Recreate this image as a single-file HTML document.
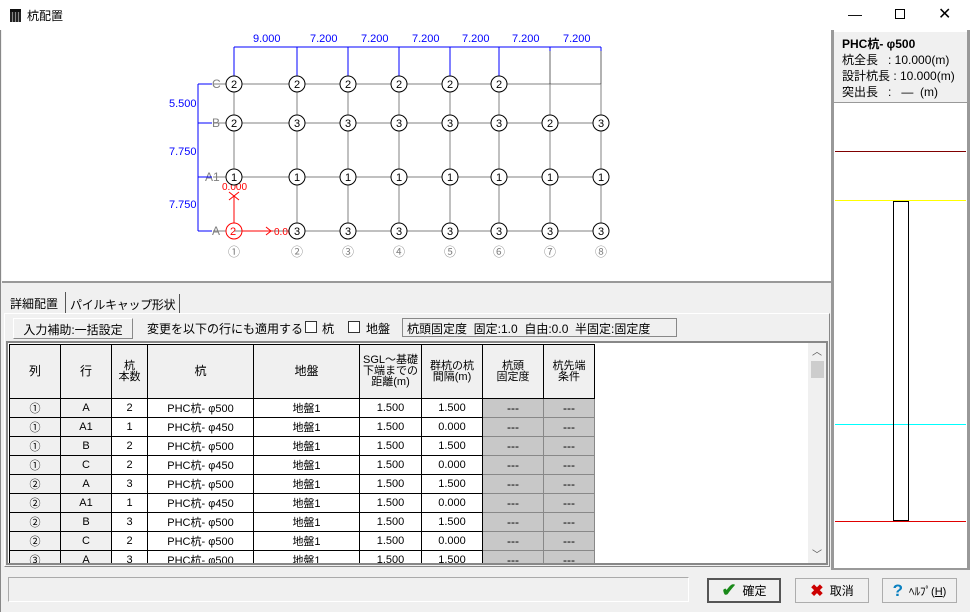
<!DOCTYPE html>
<html><head><meta charset="utf-8"><style>
*{box-sizing:border-box;margin:0;padding:0}
body{width:970px;height:612px;background:#f0f0f0;position:relative;overflow:hidden;font-family:"Liberation Sans","Noto Sans CJK JP",sans-serif;font-size:12px;color:#000}
.a{position:absolute;white-space:nowrap}
table{border-collapse:collapse;table-layout:fixed}
td{border:1px solid #000;text-align:center;height:19px;font-size:11px;padding:0;white-space:nowrap;overflow:hidden}
.h td{height:54px;background:#f0f0f0;line-height:11px}
.g{background:#f0f0f0}
.k{background:#c8c8c8;border-color:#888;font-size:12px}
.btn{position:absolute;top:578px;height:25px;background:#f0f0f0;border:1px solid #adadad;font-size:12px;display:flex;align-items:center;justify-content:center;gap:6px}
</style></head><body>
<div class="a" style="left:0;top:0;width:970px;height:30px;background:#fff"></div>
<div class="a" style="left:10px;top:9px;width:11px;height:13px;background:repeating-linear-gradient(90deg,#222 0 2px,#888 2px 3px);border-top:3px solid #111"></div>
<div class="a" style="left:27px;top:7px;font-size:12px">杭配置</div>
<div class="a" style="left:848px;top:6px;font-size:14px">—</div>
<div class="a" style="left:895px;top:9px;width:10px;height:10px;border:1px solid #000"></div>
<div class="a" style="left:938px;top:4px;font-size:16px">✕</div>
<div class="a" style="left:0;top:30px;width:1px;height:582px;background:#888"></div>
<div class="a" style="left:2px;top:30px;width:829px;height:253px;background:#fff;border-bottom:2px solid #999"></div>
<svg class="a" style="left:0;top:0" width="831" height="283" font-family="Liberation Sans" font-size="11">
<g stroke="#808080" fill="none">
<line x1="234" y1="84" x2="601" y2="84"/><line x1="234" y1="123" x2="601" y2="123"/><line x1="234" y1="177" x2="601" y2="177"/><line x1="234" y1="231" x2="601" y2="231"/>
<line x1="234" y1="84" x2="234" y2="177"/>
<line x1="297" y1="84" x2="297" y2="231"/><line x1="348" y1="84" x2="348" y2="231"/><line x1="399" y1="84" x2="399" y2="231"/><line x1="450" y1="84" x2="450" y2="231"/><line x1="499" y1="84" x2="499" y2="231"/><line x1="550" y1="84" x2="550" y2="231"/><line x1="601" y1="84" x2="601" y2="231"/>
<line x1="213" y1="84" x2="226" y2="84"/><line x1="213" y1="123" x2="226" y2="123"/><line x1="213" y1="177" x2="226" y2="177"/><line x1="213" y1="231" x2="226" y2="231"/>
</g>
<g fill="#808080" font-size="12"><text x="212" y="88">C</text><text x="212" y="127">B</text><text x="205" y="181">A1</text><text x="212" y="235">A</text></g>
<g stroke="#0000ff" fill="none">
<line x1="234" y1="47" x2="601" y2="47"/>
<line x1="234" y1="47" x2="234" y2="76"/><line x1="297" y1="47" x2="297" y2="76"/><line x1="348" y1="47" x2="348" y2="76"/><line x1="399" y1="47" x2="399" y2="76"/><line x1="450" y1="47" x2="450" y2="76"/><line x1="499" y1="47" x2="499" y2="76"/><line x1="550" y1="47" x2="550" y2="51"/><line x1="601" y1="47" x2="601" y2="51"/>
<line x1="198" y1="84" x2="198" y2="231"/>
<line x1="198" y1="84" x2="212" y2="84"/><line x1="198" y1="123" x2="212" y2="123"/><line x1="198" y1="177" x2="212" y2="177"/><line x1="198" y1="231" x2="212" y2="231"/>
</g>
<g stroke="#000" stroke-opacity="0.6"><line x1="550" y1="51" x2="550" y2="84"/><line x1="601" y1="51" x2="601" y2="84"/></g>
<g fill="#0000ff"><text x="253" y="42">9.000</text><text x="310" y="42">7.200</text><text x="361" y="42">7.200</text><text x="412" y="42">7.200</text><text x="462" y="42">7.200</text><text x="512" y="42">7.200</text><text x="563" y="42">7.200</text>
<text x="169" y="107">5.500</text><text x="169" y="155">7.750</text><text x="169" y="208">7.750</text></g>
<g stroke="#ff0000" fill="none"><line x1="234" y1="196" x2="234" y2="223"/><line x1="242" y1="231" x2="273" y2="231"/><path d="M229 192l10 8M239 192l-10 8M266 227l5 4-5 4"/><circle cx="234" cy="231" r="8"/></g>
<g fill="#ff0000" font-size="10"><text x="222" y="190">0.000</text><text x="274" y="235">0.000</text><text x="230" y="235" font-size="11">2</text></g>
<g stroke="#000" fill="#fff">
<circle cx="234" cy="84" r="8"/><circle cx="297" cy="84" r="8"/><circle cx="348" cy="84" r="8"/><circle cx="399" cy="84" r="8"/><circle cx="450" cy="84" r="8"/><circle cx="499" cy="84" r="8"/>
<circle cx="234" cy="123" r="8"/><circle cx="297" cy="123" r="8"/><circle cx="348" cy="123" r="8"/><circle cx="399" cy="123" r="8"/><circle cx="450" cy="123" r="8"/><circle cx="499" cy="123" r="8"/><circle cx="550" cy="123" r="8"/><circle cx="601" cy="123" r="8"/>
<circle cx="234" cy="177" r="8"/><circle cx="297" cy="177" r="8"/><circle cx="348" cy="177" r="8"/><circle cx="399" cy="177" r="8"/><circle cx="450" cy="177" r="8"/><circle cx="499" cy="177" r="8"/><circle cx="550" cy="177" r="8"/><circle cx="601" cy="177" r="8"/>
<circle cx="297" cy="231" r="8"/><circle cx="348" cy="231" r="8"/><circle cx="399" cy="231" r="8"/><circle cx="450" cy="231" r="8"/><circle cx="499" cy="231" r="8"/><circle cx="550" cy="231" r="8"/><circle cx="601" cy="231" r="8"/>
</g>
<g fill="#000" text-anchor="middle">
<text x="234" y="88">2</text><text x="297" y="88">2</text><text x="348" y="88">2</text><text x="399" y="88">2</text><text x="450" y="88">2</text><text x="499" y="88">2</text>
<text x="234" y="127">2</text><text x="297" y="127">3</text><text x="348" y="127">3</text><text x="399" y="127">3</text><text x="450" y="127">3</text><text x="499" y="127">3</text><text x="550" y="127">2</text><text x="601" y="127">3</text>
<text x="234" y="181">1</text><text x="297" y="181">1</text><text x="348" y="181">1</text><text x="399" y="181">1</text><text x="450" y="181">1</text><text x="499" y="181">1</text><text x="550" y="181">1</text><text x="601" y="181">1</text>
<text x="297" y="235">3</text><text x="348" y="235">3</text><text x="399" y="235">3</text><text x="450" y="235">3</text><text x="499" y="235">3</text><text x="550" y="235">3</text><text x="601" y="235">3</text>
</g>
<g fill="#808080" text-anchor="middle" font-family="Noto Sans CJK JP" font-size="12"><text x="234" y="256">①</text><text x="297" y="256">②</text><text x="348" y="256">③</text><text x="399" y="256">④</text><text x="450" y="256">⑤</text><text x="499" y="256">⑥</text><text x="550" y="256">⑦</text><text x="601" y="256">⑧</text></g>
</svg>
<!-- right panel -->
<div class="a" style="left:831px;top:30px;width:139px;height:540px;border-left:3px solid #999;border-right:3px solid #999;border-bottom:2px solid #999;background:#fff"></div>
<div class="a" style="left:834px;top:32px;width:133px;height:71px;background:#f0f0f0;border-bottom:1px solid #999;padding:4px 0 0 8px;font-size:12px;line-height:16px">
<b>PHC杭- φ500</b><br>杭全長 &nbsp;&nbsp;: 10.000(m)<br>設計杭長 : 10.000(m)<br>突出長 &nbsp;&nbsp;: &nbsp;&nbsp;— &nbsp;(m)</div>
<div class="a" style="left:835px;top:151px;width:131px;height:1px;background:#800000"></div>
<div class="a" style="left:835px;top:200px;width:131px;height:1px;background:#ffff00"></div>
<div class="a" style="left:835px;top:424px;width:131px;height:1px;background:#00ffff"></div>
<div class="a" style="left:835px;top:521px;width:131px;height:1px;background:#e00000"></div>
<div class="a" style="left:893px;top:201px;width:16px;height:320px;border:1px solid #000;background:transparent"></div>
<!-- tabs -->
<div class="a" style="left:4px;top:292px;width:62px;height:22px;background:#f0f0f0;border-right:1px solid #555;padding:3px 0 0 6px">詳細配置</div>
<div class="a" style="left:66px;top:294px;width:114px;height:19px;border-right:1px solid #555;padding:2px 0 0 4px;font-size:12px;letter-spacing:-0.3px">パイルキャップ形状</div>
<div class="a" style="left:4px;top:313px;width:826px;height:254px;border:1px solid #fff;border-right-color:#888;border-bottom-color:#888"></div>
<div class="a" style="left:13px;top:318px;width:120px;height:21px;border:1px solid #888;border-top-color:#fff;border-left-color:#fff;background:#f0f0f0;text-align:center;padding-top:2px">入力補助:一括設定</div>
<div class="a" style="left:147px;top:320px">変更を以下の行にも適用する</div>
<div class="a" style="left:305px;top:321px;width:12px;height:12px;border:1px solid #333;background:#fff"></div>
<div class="a" style="left:322px;top:320px">杭</div>
<div class="a" style="left:348px;top:321px;width:12px;height:12px;border:1px solid #333;background:#fff"></div>
<div class="a" style="left:366px;top:320px">地盤</div>
<div class="a" style="left:402px;top:318px;width:275px;height:19px;border:1px solid #888;padding:1px 0 0 4px;font-size:12px">杭頭固定度 &nbsp;固定:1.0 &nbsp;自由:0.0 &nbsp;半固定:固定度</div>
<!-- grid -->
<div class="a" style="left:6px;top:341px;width:822px;height:224px;border:2px solid #888;background:#fff;overflow:hidden">
<div class="a" style="left:1px;top:1px;width:594px;height:220px;overflow:hidden">
<table style="width:586px">
<colgroup><col style="width:51px"><col style="width:51px"><col style="width:36px"><col style="width:106px"><col style="width:106px"><col style="width:62px"><col style="width:61px"><col style="width:61px"><col style="width:51px"></colgroup>
<tr class="h"><td style="font-size:12px">列</td><td style="font-size:12px">行</td><td>杭<br>本数</td><td style="font-size:12px">杭</td><td style="font-size:12px">地盤</td><td>SGL～基礎<br>下端までの<br>距離(m)</td><td>群杭の杭<br>間隔(m)</td><td>杭頭<br>固定度</td><td>杭先端<br>条件</td></tr>
<tr><td class="g">①</td><td class="g">A</td><td>2</td><td>PHC杭- φ500</td><td>地盤1</td><td>1.500</td><td>1.500</td><td class="k">---</td><td class="k">---</td></tr>
<tr><td class="g">①</td><td class="g">A1</td><td>1</td><td>PHC杭- φ450</td><td>地盤1</td><td>1.500</td><td>0.000</td><td class="k">---</td><td class="k">---</td></tr>
<tr><td class="g">①</td><td class="g">B</td><td>2</td><td>PHC杭- φ500</td><td>地盤1</td><td>1.500</td><td>1.500</td><td class="k">---</td><td class="k">---</td></tr>
<tr><td class="g">①</td><td class="g">C</td><td>2</td><td>PHC杭- φ450</td><td>地盤1</td><td>1.500</td><td>0.000</td><td class="k">---</td><td class="k">---</td></tr>
<tr><td class="g">②</td><td class="g">A</td><td>3</td><td>PHC杭- φ500</td><td>地盤1</td><td>1.500</td><td>1.500</td><td class="k">---</td><td class="k">---</td></tr>
<tr><td class="g">②</td><td class="g">A1</td><td>1</td><td>PHC杭- φ450</td><td>地盤1</td><td>1.500</td><td>0.000</td><td class="k">---</td><td class="k">---</td></tr>
<tr><td class="g">②</td><td class="g">B</td><td>3</td><td>PHC杭- φ500</td><td>地盤1</td><td>1.500</td><td>1.500</td><td class="k">---</td><td class="k">---</td></tr>
<tr><td class="g">②</td><td class="g">C</td><td>2</td><td>PHC杭- φ500</td><td>地盤1</td><td>1.500</td><td>0.000</td><td class="k">---</td><td class="k">---</td></tr>
<tr><td class="g">③</td><td class="g">A</td><td>3</td><td>PHC杭- φ500</td><td>地盤1</td><td>1.500</td><td>1.500</td><td class="k">---</td><td class="k">---</td></tr>
</table></div>
<div class="a" style="left:800px;top:0;width:18px;height:220px;background:#f0f0f0"></div>
<div class="a" style="left:803px;top:18px;width:13px;height:17px;background:#cdcdcd"></div>
<div class="a" style="left:804px;top:0;font-size:10px;color:#555">︿</div>
<div class="a" style="left:804px;top:203px;font-size:10px;color:#555">﹀</div>
</div>
<!-- bottom -->
<div class="a" style="left:8px;top:577px;width:681px;height:25px;border:1px solid #aaa;border-bottom-color:#fff;border-right-color:#fff"></div>
<div class="btn" style="left:707px;width:74px;border:2px solid #555"><span style="color:#1a8a1a;font-size:18px;font-weight:bold">✔</span>確定</div>
<div class="btn" style="left:795px;width:74px"><span style="color:#c00;font-size:16px;font-weight:bold">✖</span>取消</div>
<div class="btn" style="left:882px;width:75px"><span style="color:#0a80c0;font-size:17px;font-weight:bold">?</span><span style="font-size:11px">ﾍﾙﾌﾟ(<u>H</u>)</span></div>
</body></html>
